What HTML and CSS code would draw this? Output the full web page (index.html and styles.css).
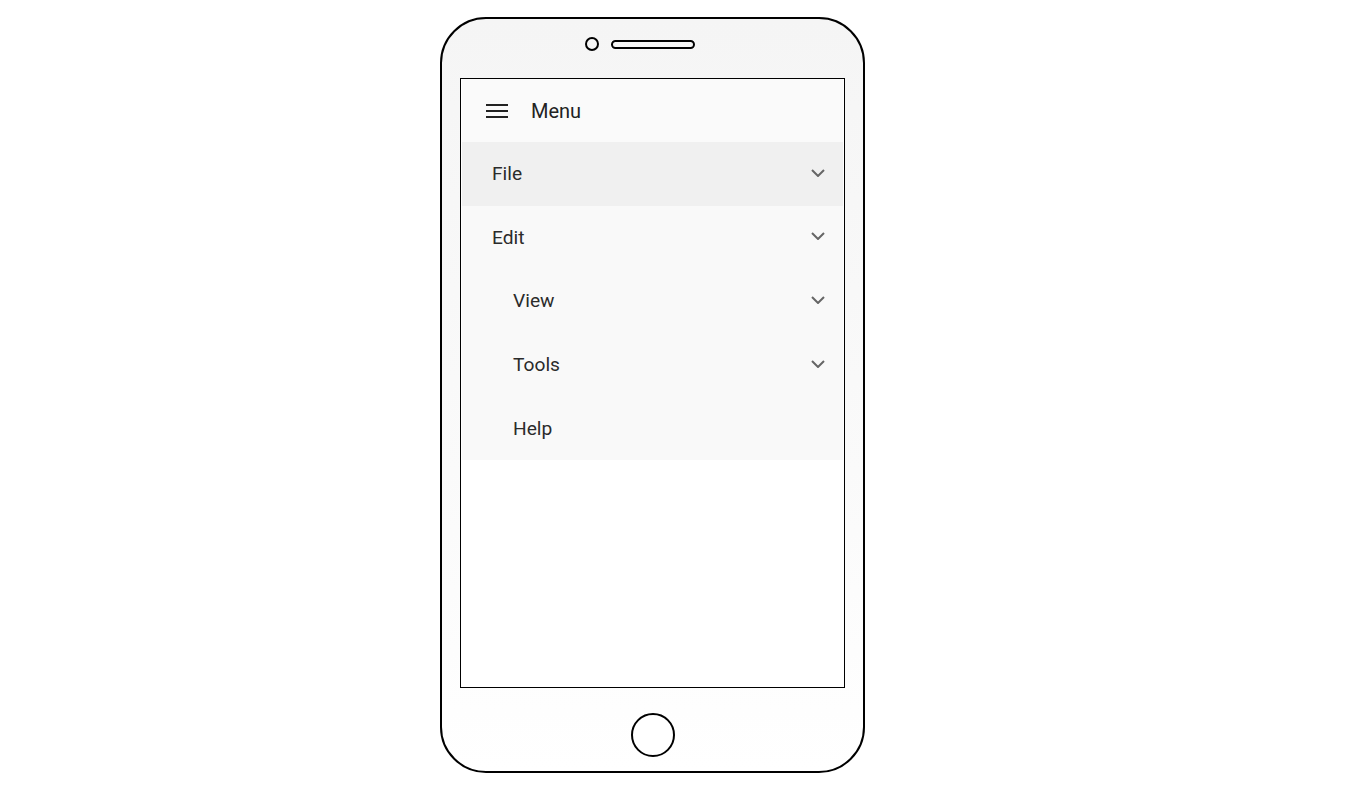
FILE: index.html
```html
<!DOCTYPE html>
<html lang="en">
<head>
<meta charset="utf-8">
<title>Menu</title>
<link rel="stylesheet" href="styles.css">
</head>
<body>
<div class="page">
  <div class="phone">
    <div class="phone-top">
      <div class="sensors">
        <span class="camera"></span>
        <span class="speaker"></span>
      </div>
    </div>
    <div class="screen">
      <nav class="menu">
        <div class="menu-header">
          <svg class="hamburger" width="22" height="14" viewBox="0 0 22 14" aria-hidden="true">
            <rect x="0" y="0" width="22" height="2" fill="#222"/>
            <rect x="0" y="6" width="22" height="2" fill="#222"/>
            <rect x="0" y="12" width="22" height="2" fill="#222"/>
          </svg>
          <span class="menu-title">Menu</span>
        </div>
        <div class="menu-item active">
          <span class="label">File</span>
          <svg class="chev" width="14" height="8" viewBox="0 0 14 8"><polyline points="1,1 7,7 13,1" fill="none" stroke="#666" stroke-width="2"/></svg>
        </div>
        <div class="menu-item">
          <span class="label">Edit</span>
          <svg class="chev" width="14" height="8" viewBox="0 0 14 8"><polyline points="1,1 7,7 13,1" fill="none" stroke="#666" stroke-width="2"/></svg>
        </div>
        <div class="menu-item sub">
          <span class="label">View</span>
          <svg class="chev" width="14" height="8" viewBox="0 0 14 8"><polyline points="1,1 7,7 13,1" fill="none" stroke="#666" stroke-width="2"/></svg>
        </div>
        <div class="menu-item sub">
          <span class="label">Tools</span>
          <svg class="chev" width="14" height="8" viewBox="0 0 14 8"><polyline points="1,1 7,7 13,1" fill="none" stroke="#666" stroke-width="2"/></svg>
        </div>
        <div class="menu-item sub">
          <span class="label">Help</span>
        </div>
      </nav>
    </div>
    <div class="phone-bottom">
      <span class="home"></span>
    </div>
  </div>
</div>
</body>
</html>
```
FILE: styles.css
```css
html, body {
  margin: 0;
  padding: 0;
  background: #fff;
}

body {
  font-family: Roboto, "Liberation Sans", Arial, sans-serif;
  color: #2b2b2b;
}

.page {
  padding: 17px 0 0 440px;
}

.phone {
  box-sizing: border-box;
  width: 425px;
  height: 756px;
  border: 2px solid #000;
  border-radius: 46px;
  background: linear-gradient(to bottom, #f5f5f5 0%, #fafafa 60%, #ffffff 100%);
  display: flex;
  flex-direction: column;
  align-items: center;
}

.phone-top {
  box-sizing: border-box;
  height: 59px;
  width: 100%;
  padding-top: 19px;
  display: flex;
  justify-content: center;
}

.sensors {
  display: flex;
  align-items: flex-start;
  gap: 12px;
  margin-right: 26px;
}

.camera {
  box-sizing: border-box;
  width: 14px;
  height: 14px;
  margin-top: -1px;
  border: 2px solid #000;
  border-radius: 50%;
}

.speaker {
  box-sizing: border-box;
  width: 84px;
  height: 9px;
  margin-top: 2px;
  border: 2px solid #000;
  border-radius: 5px;
}

.screen {
  box-sizing: border-box;
  width: 385px;
  height: 610px;
  border: 1px solid #000;
  padding: 0 1px;
  background: #fff;
  flex: none;
}

.menu {
  background: #f9f9f9;
}

.menu-header {
  height: 63px;
  display: flex;
  align-items: center;
  padding-left: 24px;
  background: #fafafa;
}

.hamburger {
  display: block;
  flex: none;
  margin-top: 1px;
}

.menu-title {
  margin-left: 23px;
  font-size: 20px;
  color: #222;
}

.menu-item {
  box-sizing: border-box;
  height: 63.6px;
  display: flex;
  align-items: center;
  justify-content: space-between;
  padding: 0 18px 0 30px;
  font-size: 19.2px;
  color: #2b2b2b;
}

.menu-item.sub {
  padding-left: 51px;
}

.menu-item.active {
  background: #f0f0f0;
}

.chev {
  display: block;
  flex: none;
  margin-top: -2px;
}

.phone-bottom {
  padding-top: 25px;
}

.home {
  display: block;
  box-sizing: border-box;
  width: 44px;
  height: 44px;
  border: 2px solid #000;
  border-radius: 50%;
  background: #fff;
}
```
